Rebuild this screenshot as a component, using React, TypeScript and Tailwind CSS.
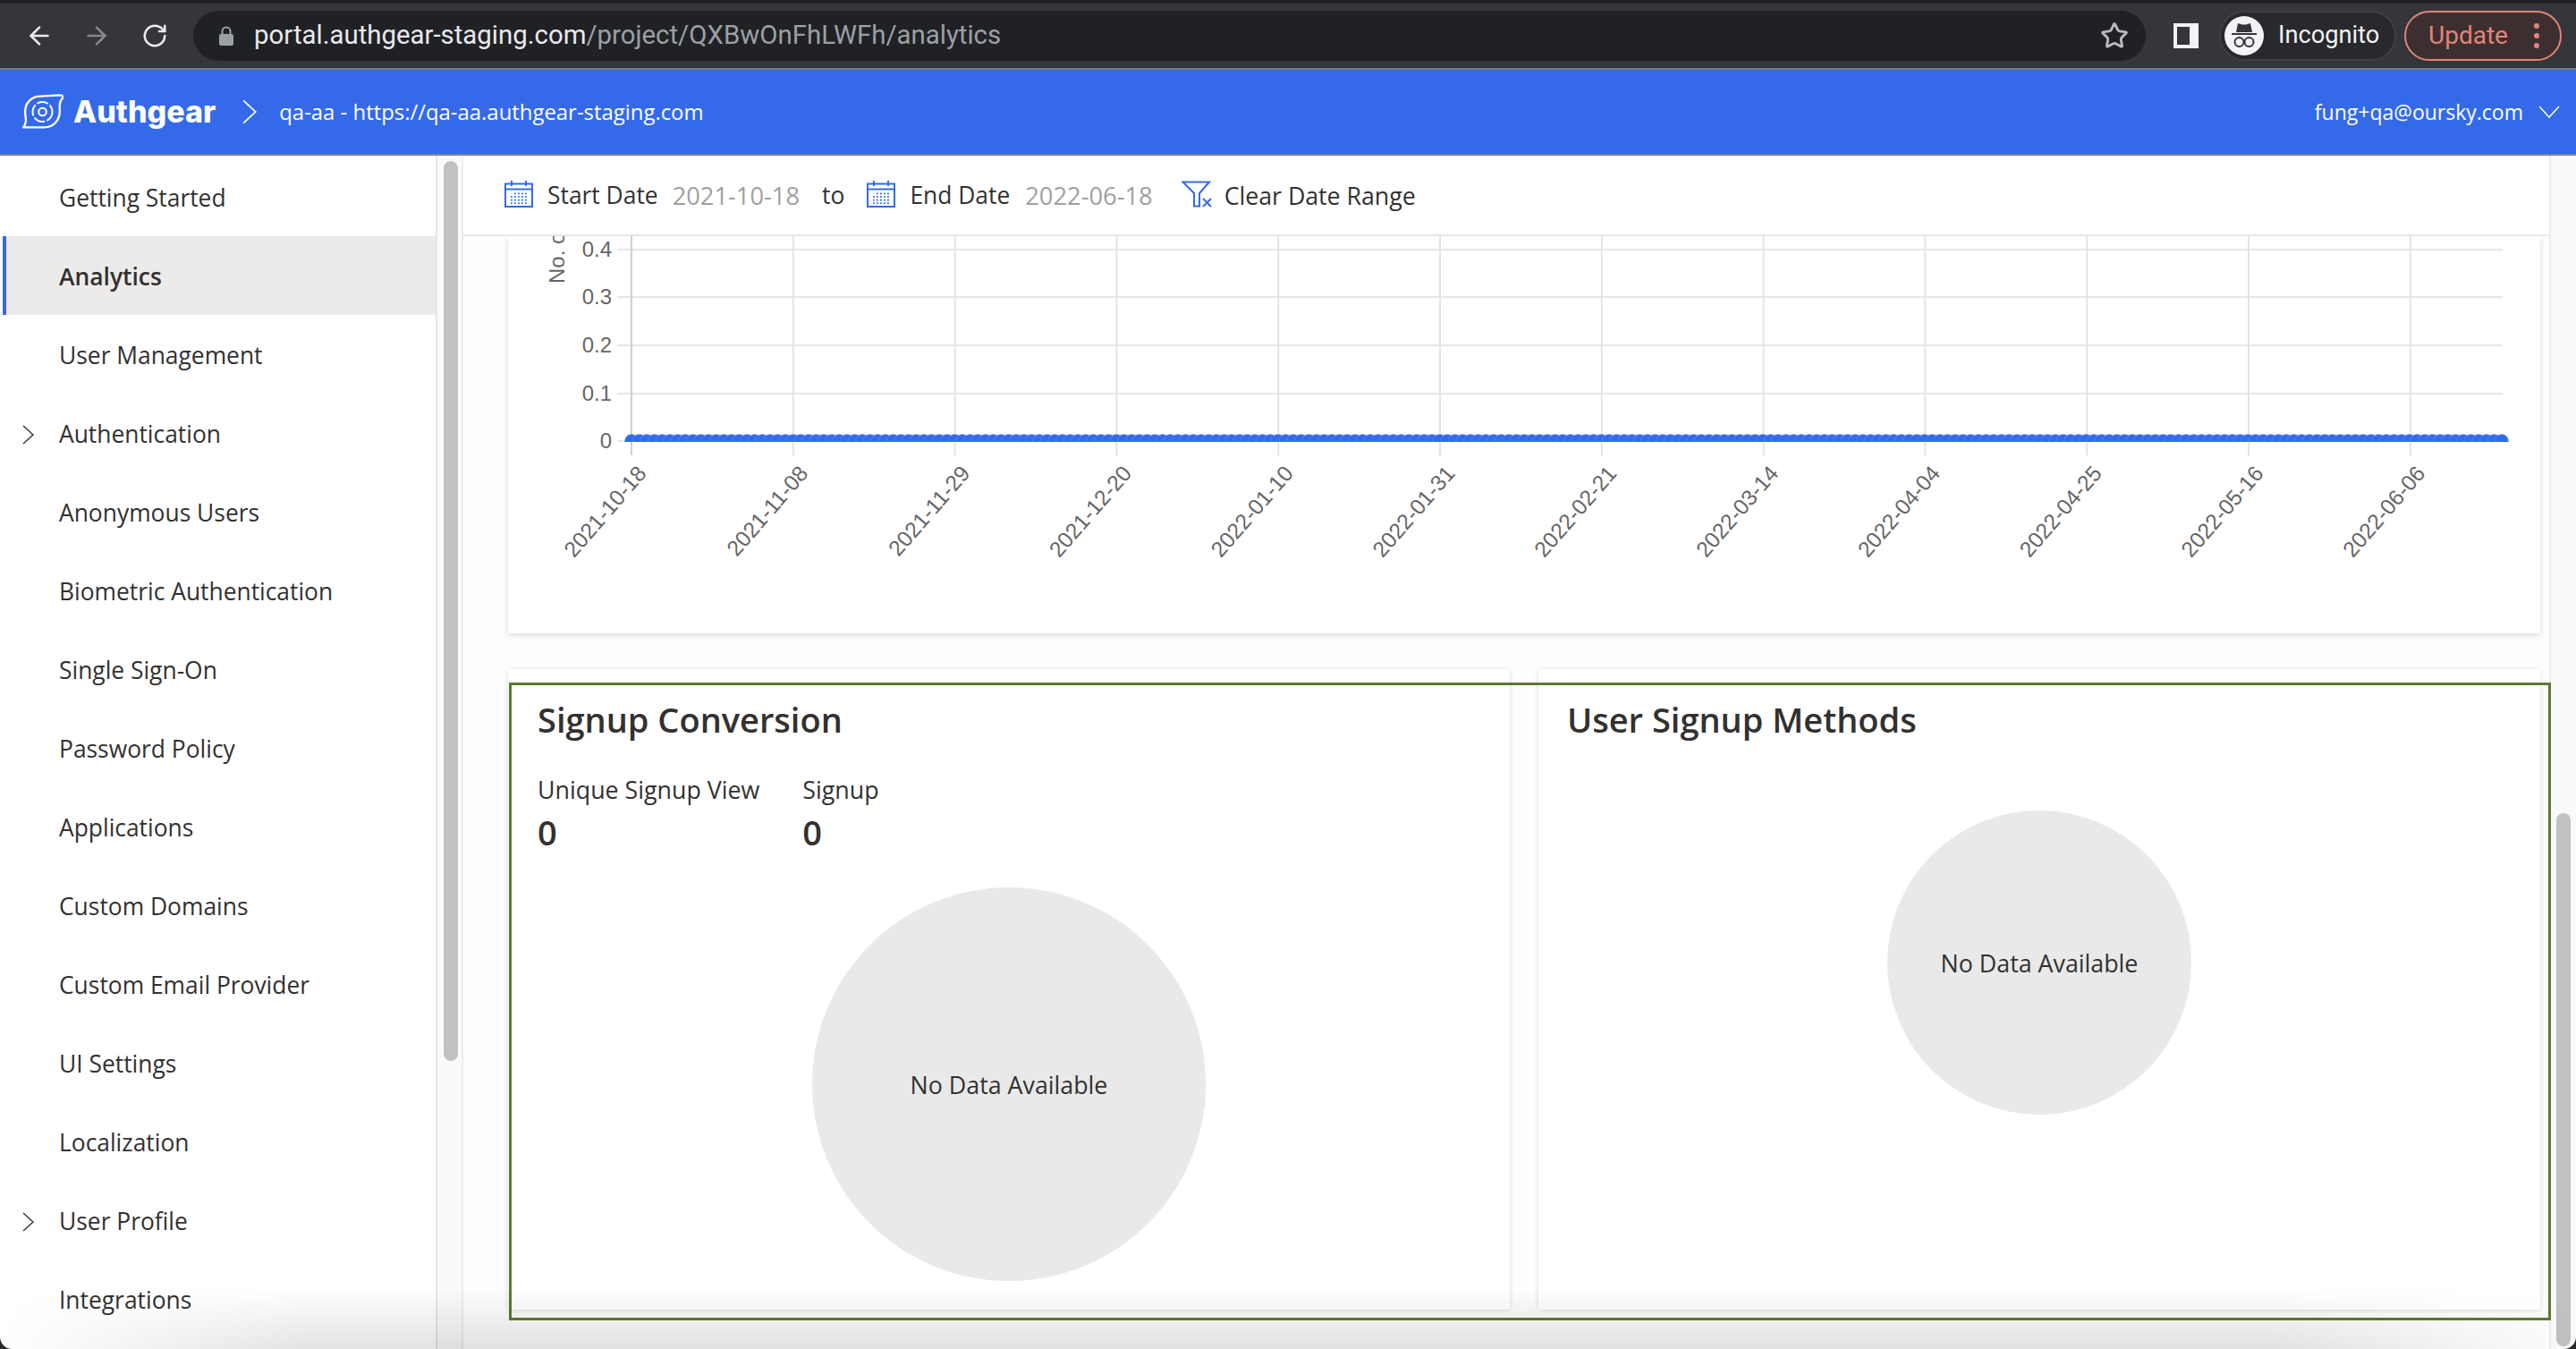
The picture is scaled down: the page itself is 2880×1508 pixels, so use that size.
import { ArrowLeft, ArrowRight, RotateCw, Star } from 'lucide-react'

const navItems = [
  { label: 'Getting Started' },
  { label: 'Analytics', active: true },
  { label: 'User Management' },
  { label: 'Authentication', expandable: true },
  { label: 'Anonymous Users' },
  { label: 'Biometric Authentication' },
  { label: 'Single Sign-On' },
  { label: 'Password Policy' },
  { label: 'Applications' },
  { label: 'Custom Domains' },
  { label: 'Custom Email Provider' },
  { label: 'UI Settings' },
  { label: 'Localization' },
  { label: 'User Profile', expandable: true },
  { label: 'Integrations' },
]

const tickDates = [
  '2021-10-18', '2021-11-08', '2021-11-29', '2021-12-20', '2022-01-10', '2022-01-31',
  '2022-02-21', '2022-03-14', '2022-04-04', '2022-04-25', '2022-05-16', '2022-06-06',
]

const yTicks = [
  { label: '0.4', y: 15 },
  { label: '0.3', y: 68 },
  { label: '0.2', y: 122 },
  { label: '0.1', y: 176 },
  { label: '0', y: 229 },
]

function AuthgearLogo() {
  return (
    <svg width="47" height="40" viewBox="0 0 140 120" fill="none" stroke="white" className="shrink-0">
      <path d="M6 112 C18 96 14 84 12 66 C9 30 34 8 62 8 L130 4 C138 4 140 10 136 16 C124 30 128 44 128 56 C128 92 104 112 76 112 Z" strokeWidth="7" strokeLinejoin="round" />
      <circle cx="70" cy="60" r="13" strokeWidth="6" />
      <circle cx="70" cy="60" r="33" strokeWidth="6" strokeDasharray="34 12" strokeLinecap="round" />
    </svg>
  )
}

function IncognitoIcon() {
  return (
    <svg width="44" height="44" viewBox="0 0 44 44" className="shrink-0">
      <circle cx="22" cy="22" r="22" fill="#f1f3f4" />
      <path d="M15 8 L20 9.5 L24 9.5 L29 8 L31 18 L13 18 Z" fill="#35363a" />
      <path d="M8 20 H36" stroke="#35363a" strokeWidth="2" />
      <circle cx="16.5" cy="29" r="5" fill="none" stroke="#35363a" strokeWidth="2" />
      <circle cx="27.5" cy="29" r="5" fill="none" stroke="#35363a" strokeWidth="2" />
      <path d="M21 28 H23" stroke="#35363a" strokeWidth="1.5" />
    </svg>
  )
}

function SidePanelIcon() {
  return (
    <svg width="28" height="28" viewBox="0 0 28 28" className="shrink-0">
      <rect width="28" height="28" fill="#f1f3f4" />
      <rect x="4" y="4" width="14" height="20" fill="#35363a" />
    </svg>
  )
}

function CalendarIcon() {
  const dots = []
  for (let r = 0; r < 4; r++) {
    for (let c = 0; c < 5; c++) {
      if (r === 0 && c === 0) continue
      dots.push(<rect key={`${r}-${c}`} x={7 + c * 4} y={13.5 + r * 3.6} width="1.8" height="1.8" fill="#356ae6" />)
    }
  }
  return (
    <svg width="32" height="30" viewBox="0 0 32 30" fill="none" className="-mt-[4px] shrink-0">
      <rect x="1" y="3.5" width="30" height="25.5" stroke="#356ae6" strokeWidth="2" />
      <path d="M1 9.5 H31" stroke="#356ae6" strokeWidth="2" />
      <path d="M8 0 V6 M24 0 V6" stroke="#356ae6" strokeWidth="2" />
      {dots}
    </svg>
  )
}

function FilterClearIcon() {
  return (
    <svg width="34" height="30" viewBox="0 0 34 30" fill="none" className="-mt-[4px] shrink-0">
      <path d="M1.5 1.5 H31 L20 14 V28.5 H14 V14 Z" stroke="#356ae6" strokeWidth="2" strokeLinejoin="miter" />
      <path d="M24 20 L33 29 M33 20 L24 29" stroke="#356ae6" strokeWidth="2" />
    </svg>
  )
}

function Chevron({ dir, color, className }: { dir: 'right' | 'down'; color: string; className?: string }) {
  if (dir === 'down') {
    return (
      <svg width="24" height="14" viewBox="0 0 24 14" fill="none" className={className}>
        <path d="M1 1 L12 13 L23 1" stroke={color} strokeWidth="1.5" />
      </svg>
    )
  }
  return (
    <svg width="14" height="24" viewBox="0 0 14 24" fill="none" className={className}>
      <path d="M1 1 L13 12 L1 23" stroke={color} strokeWidth="1.5" />
    </svg>
  )
}

function BrowserBar() {
  return (
    <div className="flex h-[72px] items-center border-b-2 border-[#7b7b7d] bg-[#35363a] box-content">
      <ArrowLeft size={32} strokeWidth={2} className="ml-[28px] text-[#e8eaed]" />
      <ArrowRight size={32} strokeWidth={2} className="ml-[32px] text-[#85878a]" />
      <RotateCw size={30} strokeWidth={2} className="ml-[34px] text-[#e8eaed]" />
      <div className="ml-[28px] flex h-[56px] w-[2183px] items-center rounded-full bg-[#202124]">
        <svg width="18" height="22" viewBox="0 0 18 22" className="ml-[28px] shrink-0">
          <path d="M4.5 9 V6 a4.5 4.5 0 0 1 9 0 V9" fill="none" stroke="#9aa0a6" strokeWidth="2" />
          <rect x="1" y="9" width="16" height="13" rx="2" fill="#9aa0a6" />
        </svg>
        <div className="ml-[22px] font-['Roboto',sans-serif] text-[29.4px] leading-none text-[#e8eaed]">
          portal.authgear-staging.com<span className="text-[#9aa0a6]">/project/QXBwOnFhLWFh/analytics</span>
        </div>
        <Star size={32} strokeWidth={2.2} className="ml-auto mr-[19px] text-[#b8babd]" />
      </div>
      <div className="ml-[31px]"><SidePanelIcon /></div>
      <div className="ml-[23px] flex h-[56px] w-[198px] items-center rounded-full border-2 border-[#3f4044] bg-[#28292c] pl-[4px]">
        <IncognitoIcon />
        <span className="ml-[16px] font-['Roboto',sans-serif] text-[27.2px] leading-none text-[#f1f3f4]">Incognito</span>
      </div>
      <div className="ml-[9px] flex h-[56px] w-[176px] items-center rounded-full border-2 border-[#e0847b] bg-[#3d2f2f] pl-[25px]">
        <span className="font-['Roboto',sans-serif] text-[28px] leading-none text-[#e0847b]">Update</span>
        <span className="ml-[29px] flex flex-col gap-[5px]">
          <span className="h-[6px] w-[6px] rounded-full bg-[#e0847b]" />
          <span className="h-[6px] w-[6px] rounded-full bg-[#e0847b]" />
          <span className="h-[6px] w-[6px] rounded-full bg-[#e0847b]" />
        </span>
      </div>
    </div>
  )
}

function AppHeader() {
  return (
    <div className="flex h-[94px] items-center border-b-2 border-[#808080] bg-[#346aea] pl-[24px] pr-[18px] text-white box-content">
      <AuthgearLogo />
      <span className="ml-[11px] font-['Inter',sans-serif] text-[34px] font-extrabold leading-none">Authgear</span>
      <Chevron dir="right" color="white" className="ml-[30px] h-[28px] w-[16px]" />
      <span className="ml-[25px] text-[23.9px] leading-none">qa-aa - https://qa-aa.authgear-staging.com</span>
      <span className="ml-auto text-[23px] leading-none">fung+qa@oursky.com</span>
      <Chevron dir="down" color="white" className="ml-[17px]" />
    </div>
  )
}

function Sidebar() {
  return (
    <div className="flex w-[489px] shrink-0 flex-col overflow-hidden border-r-2 border-[#e6e6e6] pl-[3px] pt-[2px]">
      {navItems.map((item) => (
        <div
          key={item.label}
          className={
            item.active
              ? "flex h-[88px] shrink-0 items-center border-l-4 border-[#346aea] bg-[#edebe9] pl-[59px] pt-[3px] text-[26.4px] font-semibold text-[#323130]"
              : "relative flex h-[88px] shrink-0 items-center pl-[63px] pt-[3px] text-[26.4px] text-[#323130]"
          }
        >
          {item.expandable && <Chevron dir="right" color="#323130" className="absolute left-[22px] h-[22px] w-[13px]" />}
          {item.label}
        </div>
      ))}
    </div>
  )
}

function Chart() {
  const gridRight = 2230
  const xs = tickDates.map((_, i) => 138 + 180.8 * i)
  const points = Array.from({ length: 244 }, (_, i) => 138 + 8.605 * i)
  return (
    <svg width="2272" height="444" viewBox="0 0 2272 444" className="block">
      <defs>
        <clipPath id="plot">
          <rect x="120" y="200" width="2120" height="30" />
        </clipPath>
      </defs>
      {yTicks.map((t) => (
        <line key={t.label} x1="122" x2={gridRight} y1={t.y} y2={t.y} stroke="#e6e6e6" strokeWidth="2" />
      ))}
      {xs.map((x, i) => (
        <line key={x} x1={x} x2={x} y1="0" y2="245" stroke={i === 0 ? '#cfcfcf' : '#e3e3e3'} strokeWidth="2" />
      ))}
      <g clipPath="url(#plot)">
        {points.map((x) => (
          <circle key={x} cx={x} cy="229" r="7.5" fill="#346aea" stroke="#6d93ef" strokeWidth="0.5" />
        ))}
      </g>
      {yTicks.map((t) => (
        <text key={t.label} x="116" y={t.y + 8} textAnchor="end" fontFamily="Liberation Sans, sans-serif" fontSize="24" fill="#666">
          {t.label}
        </text>
      ))}
      <text transform="translate(63 53) rotate(-90)" fontFamily="Liberation Sans, sans-serif" fontSize="24" fill="#666">
        No. of Signups
      </text>
      {xs.map((x, i) => (
        <text key={tickDates[i]} transform={`translate(${x + 18} 266) rotate(-49)`} textAnchor="end" fontFamily="Liberation Sans, sans-serif" fontSize="24.5" fill="#666">
          {tickDates[i]}
        </text>
      ))}
    </svg>
  )
}

function NoData({ size }: { size: string }) {
  return (
    <div className={`mx-auto flex items-center justify-center rounded-full bg-[#e9e9e9] pt-[3px] text-[26.8px] text-[#323130] ${size}`}>
      No Data Available
    </div>
  )
}

function Main() {
  return (
    <div className="flex min-w-0 flex-1 flex-col bg-[#fdfdfd]">
      <div className="flex h-[90px] shrink-0 items-center border-b-2 border-[#ebebeb] bg-white pl-[46px] pt-[2px] text-[26.4px] text-[#323130]">
        <CalendarIcon />
        <span className="ml-[16px]">Start Date</span>
        <span className="ml-[16px] text-[27.3px] text-[#a19f9d]">2021-10-18</span>
        <span className="ml-[25px]">to</span>
        <span className="ml-[25px]"><CalendarIcon /></span>
        <span className="ml-[16px]">End Date</span>
        <span className="ml-[17px] text-[27.3px] text-[#a19f9d]">2022-06-18</span>
        <span className="ml-[32px]"><FilterClearIcon /></span>
        <span className="ml-[14px] text-[26.7px]">Clear Date Range</span>
      </div>
      <div className="pl-[50px] pr-[10px]">
        <div className="h-[444px] bg-white shadow-[0_2px_6px_rgba(0,0,0,0.14)]">
          <Chart />
        </div>
        <div className="relative mt-[40px] grid h-[716px] grid-cols-[1120px_1120px] gap-[32px]">
          <div className="bg-white pl-[33px] pr-[33px] pt-[39px] text-[#323130] shadow-[0_1px_5px_rgba(0,0,0,0.14)]">
            <div className="text-[38px] font-semibold leading-[34px]">Signup Conversion</div>
            <div className="mt-[45px] flex gap-[48px]">
              <div>
                <div className="text-[26.8px] leading-[34px]">Unique Signup View</div>
                <div className="mt-[13px] text-[38px] font-semibold leading-[34px]">0</div>
              </div>
              <div>
                <div className="text-[26.8px] leading-[34px]">Signup</div>
                <div className="mt-[13px] text-[38px] font-semibold leading-[34px]">0</div>
              </div>
            </div>
            <div className="mt-[45px]"><NoData size="h-[440px] w-[440px]" /></div>
          </div>
          <div className="bg-white pl-[32px] pr-[32px] pt-[39px] text-[#323130] shadow-[0_1px_5px_rgba(0,0,0,0.14)]">
            <div className="text-[38px] font-semibold leading-[34px]">User Signup Methods</div>
            <div className="mt-[85px]"><NoData size="h-[340px] w-[340px]" /></div>
          </div>
          {/* outline around the two cards */}
          <div className="pointer-events-none absolute bottom-[-12px] left-px right-[-12px] top-[15px] border-[3px] border-[#5b7a35]" />
        </div>
      </div>
    </div>
  )
}

export default function App() {
  return (
    <div className="relative flex h-[1508px] w-[2880px] flex-col overflow-hidden bg-white font-['Open_Sans',sans-serif]">
      <div className="h-[4px] shrink-0 bg-[#202124]" />
      <BrowserBar />
      <AppHeader />
      <div className="flex min-h-0 flex-1">
        <Sidebar />
        <div className="w-[29px] shrink-0 border-r-2 border-[#ececec] bg-[#fafafa] pl-[7px] pt-[6px]">
          <div className="h-[1006px] w-[16px] rounded-full bg-[#c1c1c1]" />
        </div>
        <Main />
        <div className="w-[30px] shrink-0 border-l-2 border-[#ececec] bg-[#f9f9f9] pl-[6px] pt-[735px]">
          <div className="h-[596px] w-[16px] rounded-full bg-[#c1c1c1]" />
        </div>
      </div>
      {/* window shadow across the bottom of the screenshot */}
      <div className="pointer-events-none absolute bottom-0 left-0 right-0 h-[68px] bg-[linear-gradient(to_top,rgba(0,0,0,0.11),transparent)] [mask-image:linear-gradient(to_right,transparent,black_12%,black_88%,transparent)]" />
      <svg width="14" height="14" viewBox="0 0 14 14" className="absolute bottom-0 left-0">
        <path d="M0 0 C0 8 6 14 14 14 H0 Z" fill="#2a2a2c" />
      </svg>
      <svg width="14" height="14" viewBox="0 0 14 14" className="absolute bottom-0 right-0">
        <path d="M14 0 C14 8 8 14 0 14 H14 Z" fill="#2a2a2c" />
      </svg>
    </div>
  )
}
